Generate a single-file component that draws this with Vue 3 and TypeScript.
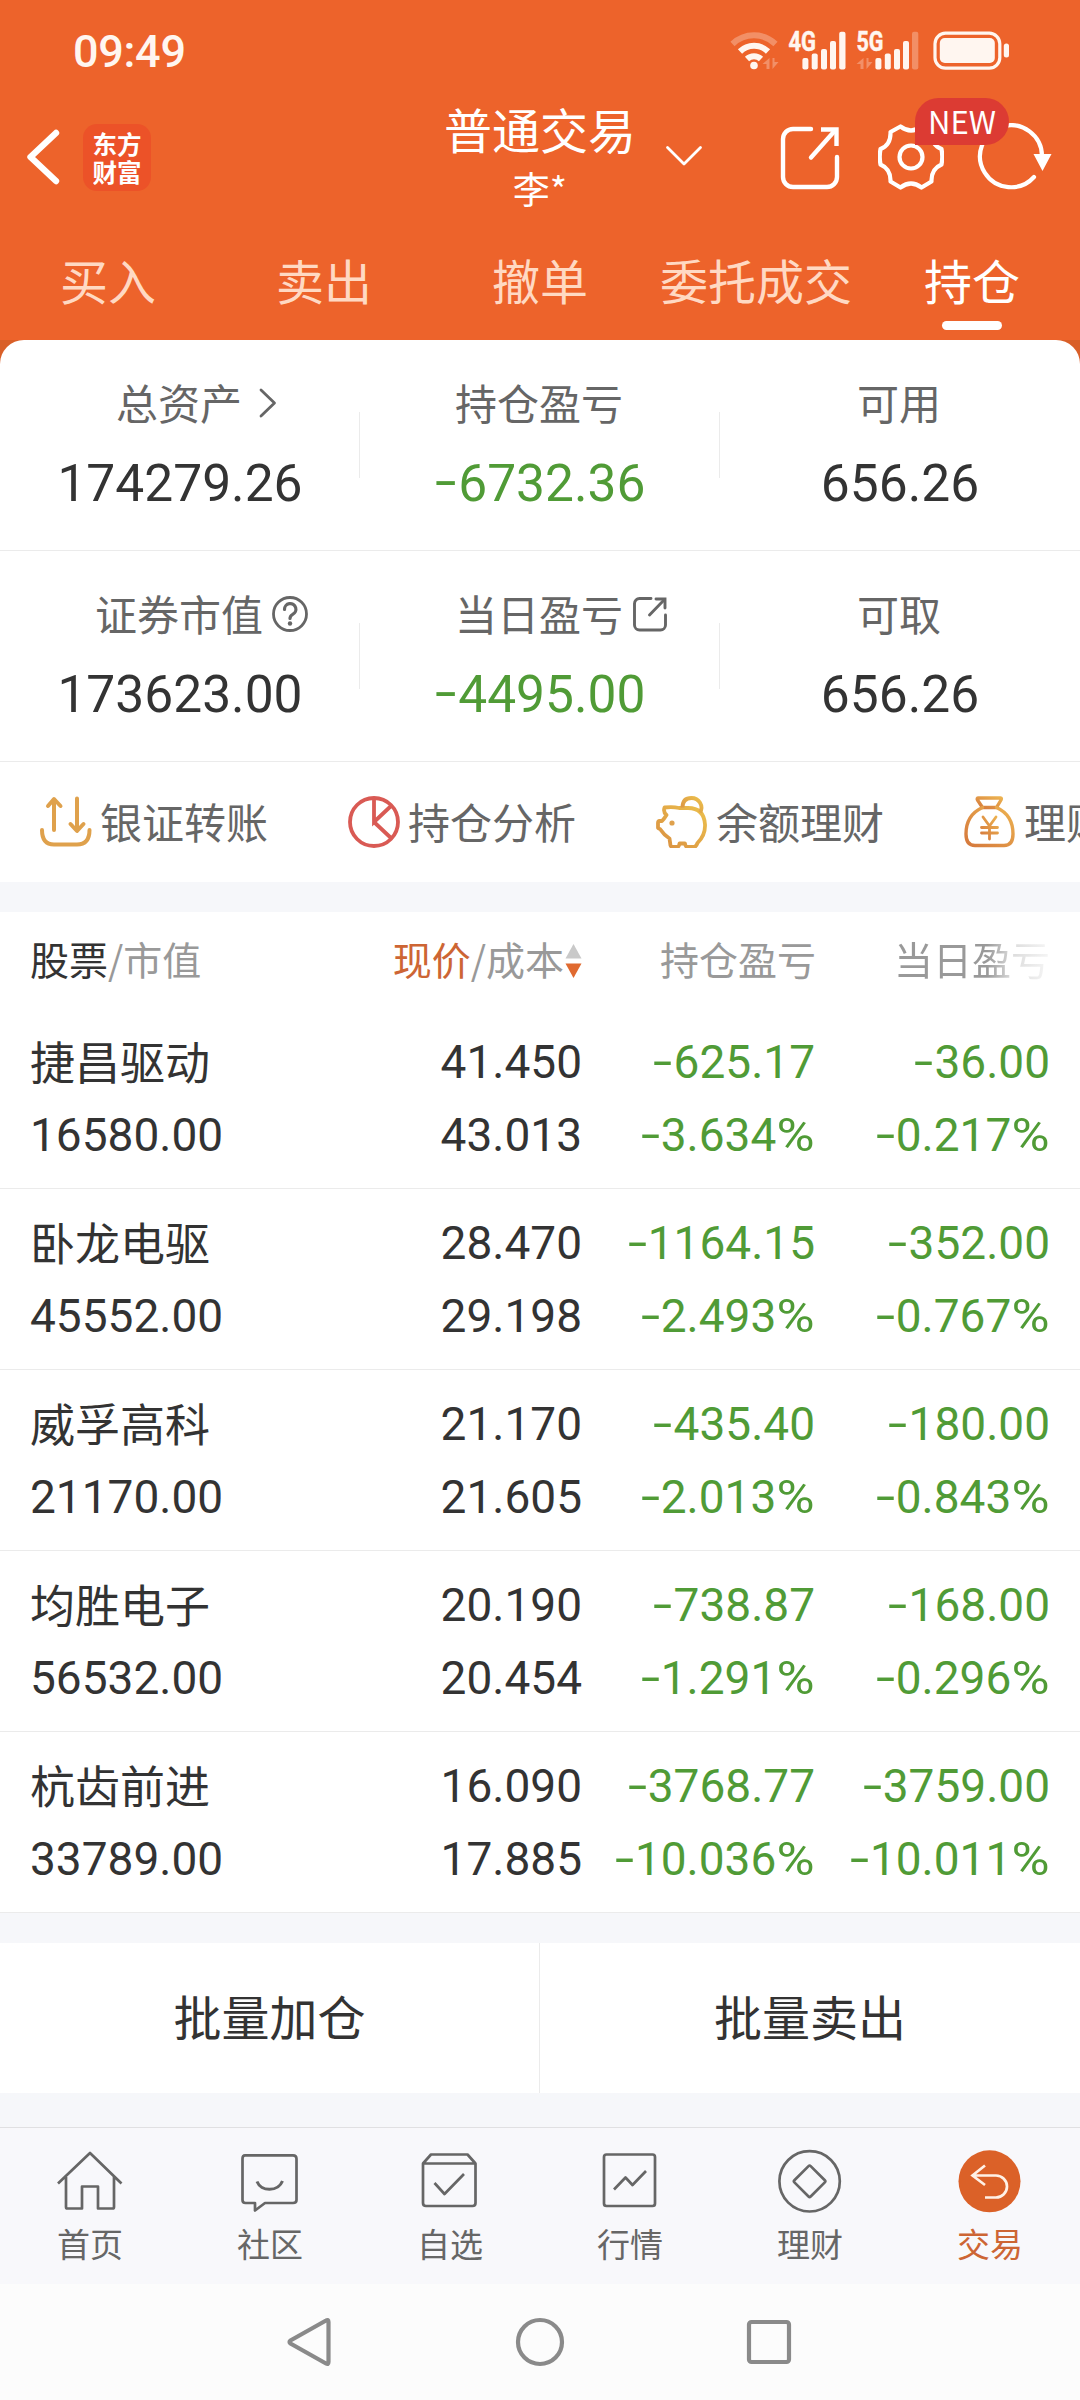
<script setup lang="ts">
interface Holding {
  name: string
  value: string
  price: string
  cost: string
  profit: string
  profitRate: string
  day: string
  dayRate: string
}

interface Metric {
  label: string
  value: string
  icon?: 'chevron' | 'help' | 'export'
}

const tabs: string[] = ['买入', '卖出', '撤单', '委托成交', '持仓']
const activeTab = '持仓'

const metricRows: Metric[][] = [
  [
    { label: '总资产', value: '174279.26', icon: 'chevron' },
    { label: '持仓盈亏', value: '-6732.36' },
    { label: '可用', value: '656.26' },
  ],
  [
    { label: '证券市值', value: '173623.00', icon: 'help' },
    { label: '当日盈亏', value: '-4495.00', icon: 'export' },
    { label: '可取', value: '656.26' },
  ],
]

const holdings: Holding[] = [
  { name: '捷昌驱动', value: '16580.00', price: '41.450', cost: '43.013', profit: '-625.17', profitRate: '-3.634%', day: '-36.00', dayRate: '-0.217%' },
  { name: '卧龙电驱', value: '45552.00', price: '28.470', cost: '29.198', profit: '-1164.15', profitRate: '-2.493%', day: '-352.00', dayRate: '-0.767%' },
  { name: '威孚高科', value: '21170.00', price: '21.170', cost: '21.605', profit: '-435.40', profitRate: '-2.013%', day: '-180.00', dayRate: '-0.843%' },
  { name: '均胜电子', value: '56532.00', price: '20.190', cost: '20.454', profit: '-738.87', profitRate: '-1.291%', day: '-168.00', dayRate: '-0.296%' },
  { name: '杭齿前进', value: '33789.00', price: '16.090', cost: '17.885', profit: '-3768.77', profitRate: '-10.036%', day: '-3759.00', dayRate: '-10.011%' },
]

const isLoss = (v: string): boolean => v.startsWith('-')
const digits = (v: string): string => v.replace(/[-%]/g, '')
</script>

<template>
  <div class="screen">
    <header class="top">
      <div class="status">
        <span class="clock">09:49</span>
        <svg class="status-icons" width="290" height="50" viewBox="725 25 290 50">
          <g fill="none" stroke-width="6" stroke="#fff6f0">
            <path d="M732.5 44 A31 31 0 0 1 775.5 44" opacity=".3" />
            <path d="M740 51.500 A20 20 0 0 1 768 51.500" />
            <path d="M747 59 A10 10 0 0 1 761 59" />
          </g>
          <circle cx="754" cy="65.500" r="3.800" fill="#fff6f0" />
          <g fill="#fff6f0" opacity=".3">
            <path d="M769.500 58v11h-3v-5h-4zM772.500 69V58h2v4h4z" />
            <path d="M863.500 58v11h-3v-5h-4zM866.500 69V58h2v4h4z" />
          </g>
          <g class="net" fill="#fff6f0">
            <text x="788.500" y="51" textLength="27.500" lengthAdjust="spacingAndGlyphs">4G</text>
            <text x="856.500" y="51" textLength="27" lengthAdjust="spacingAndGlyphs">5G</text>
          </g>
          <g fill="#fff6f0">
            <rect x="802.400" y="58" width="6" height="11.500" rx="2" />
            <rect x="811.700" y="53.500" width="6" height="16" rx="2" />
            <rect x="821" y="49" width="6" height="20.500" rx="2" />
            <rect x="830" y="41" width="6" height="28.500" rx="2" />
            <rect x="839.200" y="31.700" width="6.300" height="37.800" rx="2" />
            <rect x="875.400" y="58" width="6" height="11.500" rx="2" />
            <rect x="884.800" y="53.500" width="6" height="16" rx="2" />
            <rect x="894" y="49" width="6" height="20.500" rx="2" />
            <rect x="903" y="41" width="6" height="28.500" rx="2" />
            <rect x="912" y="31.700" width="6.300" height="37.800" rx="2" opacity=".3" />
            <rect x="939.800" y="38" width="55" height="25" rx="5" />
            <rect x="1003.800" y="43.500" width="5.200" height="14" rx="2.500" />
          </g>
          <rect x="935" y="33.200" width="64.800" height="35" rx="10.500" fill="none" stroke="#fff6f0" stroke-width="3.200" />
        </svg>
      </div>

      <div class="bar">
        <div class="bar-left">
          <svg width="40" height="64" viewBox="0 0 40 64" fill="none" stroke="#fff" stroke-width="6.400" stroke-linecap="round" stroke-linejoin="round">
            <path d="M33 8 L7.500 32 L33 56" />
          </svg>
          <div class="brand"><span>东方</span><span>财富</span></div>
        </div>
        <div class="title">
          <div class="title-main">普通交易</div>
          <div class="title-sub">李*</div>
        </div>
        <div class="bar-right">
          <svg class="drop" width="40" height="24" viewBox="0 0 40 24" fill="none" stroke="#fff" stroke-width="2.800" stroke-linecap="round" stroke-linejoin="round">
            <path d="M3.500 3.500 L20 20 L36.500 3.500" />
          </svg>
          <svg class="share" width="60" height="66" viewBox="0 0 60 66" fill="none" stroke="#fff" stroke-width="4.400" stroke-linecap="round">
            <path d="M31 4 H13 A10 10 0 0 0 3 14 V52 A10 10 0 0 0 13 62 H47 A10 10 0 0 0 57 52 V32" />
            <path d="M31 32.500 L55 5.500" />
            <path d="M41 4.500 H56.500 V21" stroke-linecap="butt" />
          </svg>
          <div class="gear">
            <svg width="66" height="66" viewBox="-33 -33 66 66" fill="none" stroke="#fff" stroke-width="4.200" stroke-linejoin="round">
              <path d="M-10.500 -30.500 Q0 -22.500 10.500 -30.500 L20.500 -25 Q20 -12 30.500 -8 Q32 0 30.500 7.500 Q20 12 20.500 24.500 L10.500 30.500 Q0 22.500 -10.500 30.500 L-20.500 24.500 Q-20 12 -30.500 7.500 Q-32 0 -30.500 -8 Q-20 -12 -20.500 -25 Z" />
              <circle r="11.500" />
            </svg>
            <span class="badge">NEW</span>
          </div>
          <svg class="reload" width="76" height="68" viewBox="0 0 76 68" fill="none" stroke="#fff" stroke-width="4.200" stroke-linecap="round">
            <path d="M57 54 A31 31 0 1 1 65 33" />
            <path d="M56.500 31 H74.500 L65.500 48 Z" fill="#fff" stroke="none" />
          </svg>
        </div>
      </div>

      <nav class="tabs">
        <div v-for="t in tabs" :key="t" class="tab" :class="{ on: t === activeTab }">
          <span>{{ t }}</span>
          <i />
        </div>
      </nav>
    </header>

    <section class="card-wrap">
      <div class="card">
        <div v-for="(row, i) in metricRows" :key="i" class="metrics">
          <div v-for="m in row" :key="m.label" class="metric">
            <div class="metric-label">
              {{ m.label }}
              <svg v-if="m.icon === 'chevron'" class="m-icon" width="36" height="36" viewBox="0 0 36 36" fill="none" stroke="#666" stroke-width="2.800" stroke-linecap="round" stroke-linejoin="round">
                <path d="M10 5 L23.500 18 L10 31" />
              </svg>
              <svg v-else-if="m.icon === 'help'" class="m-icon" width="36" height="36" viewBox="0 0 36 36" fill="none" stroke="#666" stroke-width="2.800" stroke-linecap="round">
                <circle cx="18" cy="18" r="16.500" />
                <path d="M12.500 13.500 A5.700 5.700 0 1 1 20.500 18.500 Q18 20 18 22.500" stroke-width="3.200" />
                <circle cx="18" cy="27.500" r="2.200" fill="#666" stroke="none" />
              </svg>
              <svg v-else-if="m.icon === 'export'" class="m-icon" width="36" height="36" viewBox="0 0 36 36" fill="none" stroke="#666" stroke-width="2.900" stroke-linecap="round">
                <path d="M19 2.500 H7.500 A5 5 0 0 0 2.500 7.500 V29 A5 5 0 0 0 7.500 34 H28.500 A5 5 0 0 0 33.500 29 V19" />
                <path d="M17.500 19 L32 4" />
                <path d="M24 3 H33 V12" />
              </svg>
            </div>
            <div class="metric-value num" :class="{ loss: isLoss(m.value) }"><span v-if="isLoss(m.value)" class="minus">-</span>{{ digits(m.value) }}</div>
          </div>
        </div>

        <div class="quick">
          <div class="quick-item">
            <svg width="52" height="52" viewBox="0 0 52 52" fill="none" stroke="#dfa14c" stroke-width="4" stroke-linecap="round" stroke-linejoin="round">
              <path d="M14 34 V4 M8 10 L14 3 L20.500 10" />
              <path d="M37 2.500 V34 M30.500 28 L37 35 L43.500 28" />
              <path d="M2 34 Q2 48.500 14 48.500 H37 Q49.500 48.500 49.500 34" />
            </svg>
            <span>银证转账</span>
          </div>
          <div class="quick-item">
            <svg width="52" height="52" viewBox="0 0 52 52" fill="none" stroke="#d95a54" stroke-width="3.800">
              <circle cx="26" cy="26" r="24" />
              <path d="M26 2 V26 L43 10 M26 26 L43 42" />
            </svg>
            <span>持仓分析</span>
          </div>
          <div class="quick-item">
            <svg width="52" height="52" viewBox="0 0 52 52" fill="none" stroke="url(#pig)" stroke-width="3.800" stroke-linejoin="round">
              <defs>
                <linearGradient id="pig" x1="1" y1="0" x2="0" y2="1">
                  <stop offset="0" stop-color="#ecc04c" />
                  <stop offset="1" stop-color="#d98f42" />
                </linearGradient>
              </defs>
              <path d="M23 12 Q17 10.500 8.500 11.500 Q7 16 10.500 19 Q8 23 6 25 H3.500 Q2 25 2 27 V31.500 Q2 32.500 4 33 Q8 39 13.500 42.500 L14.500 49.500 Q15 51 17 51 H21 Q23 51 23.500 47.500 H29 Q29.500 51 31.500 51 H38 Q40 51 41.500 47 Q49.500 39 49 28.500 Q48 12 32 12 Z" />
              <path d="M26.500 11.500 C26.500 4 31 2 35.500 2 C43 2 48 10 44 16.500" />
              <circle cx="16" cy="27" r="2.600" fill="#dfa14c" stroke="none" />
            </svg>
            <span>余额理财</span>
          </div>
          <div class="quick-item">
            <svg width="52" height="52" viewBox="0 0 52 52" fill="none" stroke="url(#bag)" stroke-width="3.400" stroke-linejoin="round" stroke-linecap="round">
              <defs>
                <linearGradient id="bag" x1="1" y1="0" x2="0" y2="1">
                  <stop offset="0" stop-color="#ecb250" />
                  <stop offset="1" stop-color="#d5783c" />
                </linearGradient>
              </defs>
              <path d="M14.500 2 H36.500 Q38 2 37 4 L32.500 11.500 H18.500 L13.500 4 Q12.500 2 14.500 2 Z" />
              <path d="M18.500 11.500 Q2 19 2 38 Q2 49.500 11 49.500 H40 Q49 49.500 49 38 Q49 19 32.500 11.500" />
              <path d="M19 21 L25.500 30 L32 21 M25.500 30 V43 M17.500 31.500 H33.500 M17.500 37 H33.500" stroke-width="2.800" />
            </svg>
            <span>理财</span>
          </div>
        </div>
      </div>
    </section>

    <section class="table">
      <div class="thead">
        <div><b>股票</b>/市值</div>
        <div class="r"><em>现价</em>/成本<svg width="17" height="36" viewBox="0 0 17 36"><path d="M8.500 1 L16.500 15.500 H.5Z" fill="#c9c9c9" /><path d="M.5 20.500 H16.500 L8.500 35Z" fill="#e06a30" /></svg></div>
        <div class="r shift">持仓盈亏</div>
        <div class="r fade">当日盈亏</div>
      </div>
      <div v-for="h in holdings" :key="h.name" class="trow">
        <div>
          <p class="name">{{ h.name }}</p>
          <p class="num">{{ h.value }}</p>
        </div>
        <div class="r">
          <p class="num">{{ h.price }}</p>
          <p class="num">{{ h.cost }}</p>
        </div>
        <div class="r loss">
          <p class="num"><span class="minus">-</span>{{ digits(h.profit) }}</p>
          <p class="num"><span class="minus">-</span>{{ digits(h.profitRate) }}<span class="pct">%</span></p>
        </div>
        <div class="r loss">
          <p class="num"><span class="minus">-</span>{{ digits(h.day) }}</p>
          <p class="num"><span class="minus">-</span>{{ digits(h.dayRate) }}<span class="pct">%</span></p>
        </div>
      </div>
    </section>

    <div class="actions">
      <button>批量加仓</button>
      <button>批量卖出</button>
    </div>

    <nav class="bottom">
      <div class="b-item">
        <svg width="68" height="64" viewBox="0 0 68 64"><path d="M2 34.500 L34 4 L65.500 34.500 M10 28 V58 Q10 59.500 11.500 59.500 H26 V37.500 H42 V59.500 H56.500 Q58 59.500 58 58 V28" /></svg>
        <span>首页</span>
      </div>
      <div class="b-item">
        <svg width="68" height="64" viewBox="0 0 68 64"><path d="M9 6.300 H57 Q60.500 6.300 60.500 9.800 V51 Q60.500 54 57 54 H29 L19 61.500 V54 H9.500 Q6.500 54 6.500 51 V9.800 Q6.500 6.300 9 6.300 Z" /><path d="M21 32.500 C25 43 42 43 46.500 32" stroke-width="3" /></svg>
        <span>社区</span>
      </div>
      <div class="b-item">
        <svg width="68" height="64" viewBox="0 0 68 64"><path d="M7 14.500 L15 5.500 H51.500 L59.500 14.500 M7 14.500 H59.500 V54 Q59.500 57 56.500 57 H10 Q7 57 7 54 Z" /><path d="M18.500 34 L28.500 45 L48 25" /></svg>
        <span>自选</span>
      </div>
      <div class="b-item">
        <svg width="68" height="64" viewBox="0 0 68 64"><rect x="8" y="5.500" width="51" height="51.500" rx="2.500" /><path d="M18 40.500 L29.500 28.500 L36.500 36 L50 22" /></svg>
        <span>行情</span>
      </div>
      <div class="b-item">
        <svg width="68" height="64" viewBox="0 0 68 64"><circle cx="33.600" cy="32.300" r="30.200" /><rect x="-11.500" y="-11.500" width="23" height="23" rx="1.500" transform="translate(33.600 32.300) rotate(45)" /></svg>
        <span>理财</span>
      </div>
      <div class="b-item on">
        <svg width="68" height="64" viewBox="0 0 68 64"><circle cx="33.500" cy="32.300" r="31" fill="#db6128" stroke="none" /><path d="M29 16.500 L16.500 26.500 L29 36 M17 26.500 H40 A10.700 10.700 0 0 1 40 48.500 H29" stroke="#fff1e6" stroke-linecap="butt" stroke-linejoin="miter" /></svg>
        <span>交易</span>
      </div>
    </nav>

    <div class="sysnav">
      <svg width="52" height="52" viewBox="0 0 52 52"><path d="M41 4.500 Q43.500 3 43.500 6 V46 Q43.500 49 41 47.500 L5.500 27.500 Q3.500 26 5.500 24.500 Z" /></svg>
      <svg width="52" height="52" viewBox="0 0 52 52"><circle cx="26" cy="26" r="22" /></svg>
      <svg width="52" height="52" viewBox="0 0 52 52"><rect x="6" y="6" width="40" height="40" rx="2.500" /></svg>
    </div>
  </div>
</template>

<style>
html,
body {
  margin: 0;
  background: #f6f7fa;
}
</style>

<style scoped>
.screen {
  width: 1080px;
  height: 2400px;
  overflow: hidden;
  background: #f6f7fa;
  color: #333;
  font-family: "Noto Sans CJK SC", sans-serif;
  display: flex;
  flex-direction: column;
}
svg {
  display: block;
  flex: none;
}
p {
  margin: 0;
}
.num {
  font-family: Roboto, "Noto Sans CJK SC", sans-serif;
}
.loss {
  color: #509b36;
}
.minus {
  display: inline-block;
  width: 0.46em;
  text-align: center;
  transform: translateY(-0.03em) scaleX(1.5);
}
.pct {
  display: inline-block;
  margin-left: 5px;
  transform: scaleX(1.13);
  transform-origin: right center;
}

.top {
  height: 340px;
  background: #ed632b;
  color: #fff;
  display: flex;
  flex-direction: column;
}
.status {
  height: 100px;
  padding: 25px 65px 0 73px;
  box-sizing: border-box;
  display: flex;
  justify-content: space-between;
}
.clock {
  font: 500 45px/54px Roboto, sans-serif;
  letter-spacing: -0.3px;
  color: #fff6f0;
}
.net text {
  font: 700 27px Roboto, sans-serif;
  stroke: #fff6f0;
  stroke-width: 0.5;
}
.bar {
  height: 130px;
  display: grid;
  grid-template-columns: 1fr 240px 1fr;
}
.bar-left {
  display: flex;
  padding: 24px 0 0 23px;
  gap: 20px;
}
.bar-left svg {
  margin-top: 1px;
}
.brand {
  width: 68px;
  height: 67px;
  border-radius: 14px;
  background: #ec5228;
  display: flex;
  flex-direction: column;
  align-items: center;
  justify-content: center;
  font-size: 24.5px;
  line-height: 29px;
  font-weight: 700;
}
.brand span {
  display: block;
  height: 29px;
  overflow: hidden;
  margin-top: -1px;
}
.title {
  text-align: center;
}
.title-main {
  font-size: 48px;
  line-height: 62px;
  margin-top: -3px;
}
.title-sub {
  font-size: 37px;
  line-height: 58px;
}
.bar-right {
  display: flex;
  align-items: flex-start;
}
.drop {
  margin: 44px 0 0 4px;
}
.share {
  margin: 25px 0 0 76px;
}
.gear {
  position: relative;
  margin: 24px 0 0 38px;
}
.badge {
  position: absolute;
  left: 37px;
  top: -26px;
  width: 94px;
  height: 47px;
  border-radius: 24px 24px 24px 0;
  background: #dc3b33;
  font-size: 31px;
  line-height: 45px;
  text-align: center;
}
.reload {
  margin: 23px 0 0 33px;
}
.tabs {
  flex: 1;
  display: grid;
  grid-template-columns: repeat(5, 1fr);
}
.tab {
  display: flex;
  flex-direction: column;
  align-items: center;
  padding-top: 19px;
  font-size: 48px;
  line-height: 60px;
  color: #ffd9c3;
}
.tab i {
  width: 60px;
  height: 9px;
  border-radius: 5px;
  margin-top: 12px;
}
.tab.on {
  color: #fff;
}
.tab.on i {
  background: #fff;
}

.card-wrap {
  background: linear-gradient(#d95f28 0 40px, #fff 40px);
}
.card {
  background: #fff;
  border-radius: 24px 24px 0 0;
  overflow: hidden;
}
.metrics {
  height: 211px;
  box-sizing: border-box;
  border-bottom: 1px solid #ebebeb;
  display: grid;
  grid-template-columns: repeat(3, 1fr);
}
.metric {
  padding-top: 32px;
  background: linear-gradient(#ebebeb, #ebebeb) no-repeat right 0 top 72px / 1px 66px;
}
.metric:last-child {
  background: none;
}
.metric-label {
  display: flex;
  justify-content: center;
  align-items: center;
  height: 60px;
  padding-right: 2px;
  font-size: 42px;
  line-height: 60px;
  color: #666;
}
.m-icon {
  margin: 2px -45px 0 9px;
}
.metric-value {
  margin-top: 22px;
  font-size: 51.5px;
  line-height: 60px;
  text-align: center;
}
.metric-value .minus {
  width: 0.49em;
  margin-left: -0.03em;
}
.quick {
  height: 120px;
  display: flex;
  align-items: center;
  gap: 80px;
  padding-left: 40px;
  font-size: 42px;
  line-height: 60px;
  color: #666;
}
.quick-item {
  display: flex;
  align-items: center;
  gap: 8px;
  flex: none;
}
.quick-item span {
  margin-top: -3px;
}

.table {
  margin-top: 30px;
  background: #fff;
}
.thead,
.trow {
  display: grid;
  grid-template-columns: 252px 300px 233px 235px;
  padding: 0 30px;
}
.r {
  text-align: right;
}
.thead {
  height: 96px;
  font-size: 39px;
  line-height: 92px;
  color: #999;
}
.thead b {
  font-weight: 400;
  color: #333;
}
.thead em {
  font-style: normal;
  color: #cd6534;
}
.thead .r {
  display: flex;
  justify-content: flex-end;
}
.thead .shift {
  margin-right: -1px;
}
.thead svg {
  margin: 31px 0 0 1px;
}
.fade {
  background: linear-gradient(90deg, #999 0 172px, #dcdcdc 197px, #f4f4f4 232px);
  -webkit-background-clip: text;
  background-clip: text;
  color: transparent;
}
.trow {
  height: 181px;
  box-sizing: border-box;
  padding-top: 18px;
  border-bottom: 1px solid #ebebeb;
  font-size: 46px;
  line-height: 73px;
}
.trow p {
  height: 73px;
}
.trow .name {
  font-size: 45px;
  line-height: 69px;
}

.actions {
  margin-top: 30px;
  height: 150px;
  display: grid;
  grid-template-columns: 1fr 1fr;
  background: #fff;
}
.actions button {
  border: 0;
  background: none;
  padding: 0 0 6px;
  font: 400 48px/60px "Noto Sans CJK SC", sans-serif;
  color: #333;
}
.actions button:first-child {
  border-right: 1px solid #ebebeb;
}

.bottom {
  margin-top: 34px;
  height: 157px;
  box-sizing: border-box;
  border-top: 1px solid #e0e0e2;
  background: #f8f8fb;
  display: grid;
  grid-template-columns: repeat(6, 1fr);
}
.b-item {
  display: flex;
  flex-direction: column;
  align-items: center;
  padding-top: 21px;
  font-size: 33px;
  line-height: 44px;
  color: #666;
}
.b-item span {
  margin-top: 8px;
}
.b-item.on {
  color: #cd6534;
}
.b-item svg {
  fill: none;
  stroke: #666;
  stroke-width: 2.7;
  stroke-linejoin: round;
}
.sysnav {
  flex: 1;
  background: #fcfcfc;
  display: flex;
  justify-content: center;
  gap: 177px;
  padding-top: 32px;
}
.sysnav svg {
  fill: none;
  stroke: #8a8a8a;
  stroke-width: 4.2;
}
</style>
